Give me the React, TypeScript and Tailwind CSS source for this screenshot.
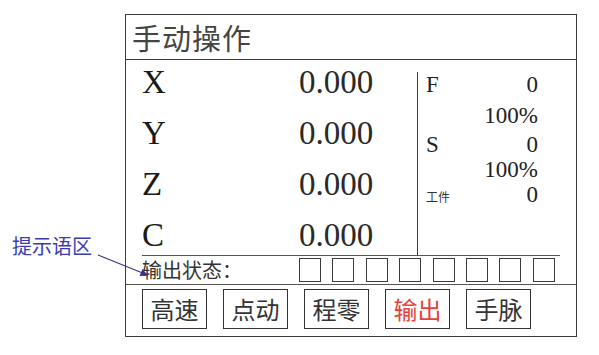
import React from "react";

const axes = ["X", "Y", "Z", "C"];
const buttons = [
  { label: "高速", red: false },
  { label: "点动", red: false },
  { label: "程零", red: false },
  { label: "输出", red: true },
  { label: "手脉", red: false },
];

const serif = "font-['Liberation_Serif','Times_New_Roman',serif]";
const cjk = "font-['Noto_Sans_CJK_SC','Noto_Sans',sans-serif]";

const App: React.FC = () => {
  return (
    <div className="relative w-[599px] h-[355px] bg-white overflow-hidden">
      {/* Main panel */}
      <div className="ml-[125px] pt-[14px]">
        <div className="w-[452px] h-[323px] border-[1.5px] border-[#3a3a3a] flex flex-col">
          {/* Title */}
          <div className="h-[45px] shrink-0 border-b-[1.5px] border-[#3a3a3a] flex items-center pl-[6px]">
            <span className={`${cjk} text-[29px] leading-none text-[#444] tracking-[1px]`}>手动操作</span>
          </div>

          {/* Body */}
          <div className="ml-[16px] w-[418px]">
            <div className="h-[196px] flex border-b-[1.5px] border-[#555]">
              {/* Axis values */}
              <div className="w-[275px]">
                {axes.map((a) => (
                  <div key={a} className={`${serif} flex h-[51px] text-[33px] leading-[44px] text-[#1a1a1a]`}>
                    <span className="w-[157px]">{a}</span>
                    <span className="text-[#2a2a2a]">0.000</span>
                  </div>
                ))}
              </div>

              {/* Feed / spindle */}
              <div className={`${serif} mt-[12px] flex-1 border-l-[1.5px] border-[#3a3a3a] pl-[8px] pr-[22px] text-[23px] leading-[25px] text-[#222]`}>
                <div className="flex justify-between">
                  <span>F</span>
                  <span>0</span>
                </div>
                <div className="mt-[6px] text-right">100%</div>
                <div className="mt-[4px] flex justify-between">
                  <span>S</span>
                  <span>0</span>
                </div>
                <div className="text-right">100%</div>
                <div className="flex items-baseline justify-between">
                  <span className={`${cjk} text-[12px] text-[#333]`}>工件</span>
                  <span>0</span>
                </div>
              </div>
            </div>

            {/* Output status */}
            <div className="h-[28px] flex items-center">
              <span className={`${cjk} w-[157px] text-[20px] leading-none text-[#333]`}>输出状态：</span>
              <div className="flex gap-[11.4px]">
                {Array.from({ length: 8 }).map((_, i) => (
                  <div key={i} className="w-[22px] h-[24px] border-[1.5px] border-[#3a3a3a]" />
                ))}
              </div>
            </div>
          </div>

          {/* Buttons */}
          <div className="flex-1 border-t-[1.5px] border-[#555] pl-[16px] pt-[4px] flex gap-[16px]">
            {buttons.map((b) => (
              <div
                key={b.label}
                className={`${cjk} w-[65px] h-[40px] border-[1.5px] border-[#333] flex items-center justify-center text-[24px] leading-none ${
                  b.red ? "text-[#e8403a]" : "text-[#333]"
                }`}
              >
                {b.label}
              </div>
            ))}
          </div>
        </div>
      </div>

      {/* Annotation */}
      <span className={`${cjk} absolute left-[12px] top-[236px] text-[20px] leading-none text-[#3c3cb0]`}>提示语区</span>
      <svg className="absolute left-0 top-0" width="599" height="355" viewBox="0 0 599 355">
        <line x1="98" y1="255" x2="145" y2="274" stroke="#34348a" strokeWidth="1.2" />
        <path d="M148 275.5 L139.5 276 L142.5 269 Z" fill="#34348a" />
      </svg>
    </div>
  );
};

export default App;
